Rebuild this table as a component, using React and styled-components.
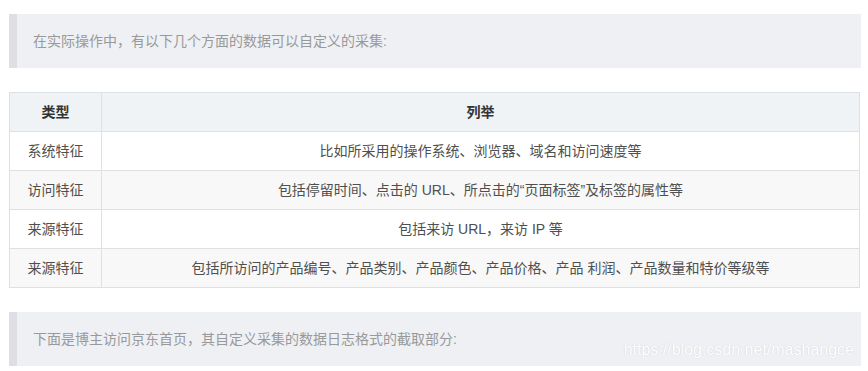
import React from "react";
import styled, { createGlobalStyle } from "styled-components";

const GlobalStyle = createGlobalStyle`
  body {
    margin: 0;
    background: #fff;
    font-family: "Liberation Sans", "Noto Sans CJK SC", sans-serif;
  }
`;

const rows = [
  { type: "系统特征", list: "比如所采用的操作系统、浏览器、域名和访问速度等" },
  { type: "访问特征", list: "包括停留时间、点击的 URL、所点击的“页面标签”及标签的属性等" },
  { type: "来源特征", list: "包括来访 URL，来访 IP 等" },
  { type: "来源特征", list: "包括所访问的产品编号、产品类别、产品颜色、产品价格、产品 利润、产品数量和特价等级等" },
];

const Article = styled.div`
  position: relative;
  width: 852px;
  padding: 14px 0 0 9px;
`;

const Quote = styled.blockquote`
  margin: 0 0 ${(p) => p.$gap}px;
  padding: 16px;
  border-left: 8px solid #dddfe4;
  background: #eef0f4;
  color: #999;
  font-size: 14px;
  line-height: 22px;
`;

const Table = styled.table`
  width: 851px;
  border-collapse: collapse;
  margin-bottom: 24px;
  font-size: 14px;
  line-height: 22px;
  color: #4f4f4f;
`;

const Th = styled.th`
  height: 38px;
  padding: 0 8px;
  border: 1px solid #dde1e5;
  background: #eff3f5;
  color: #333;
  font-weight: bold;
  text-align: center;
  width: ${(p) => p.$w || "auto"};
`;

const Row = styled.tr`
  background: ${(p) => (p.$alt ? "#f8f8f8" : "#fff")};
`;

const Td = styled.td`
  height: 38px;
  padding: 0 8px;
  border: 1px solid #dde1e5;
  text-align: center;
`;

const Watermark = styled.span`
  position: absolute;
  right: 7px;
  bottom: 7px;
  font-family: "Liberation Sans", Arial, sans-serif;
  font-size: 16px;
  color: #fff;
  text-shadow: 0 0 1px #d4d6da, 0 0 1px #d4d6da;
`;

export default function App() {
  return (
    <>
      <GlobalStyle />
      <Article>
        <Quote $gap={24}>在实际操作中，有以下几个方面的数据可以自定义的采集:</Quote>
        <Table>
          <thead>
            <tr>
              <Th $w="75px">类型</Th>
              <Th>列举</Th>
            </tr>
          </thead>
          <tbody>
            {rows.map((r, i) => (
              <Row key={i} $alt={i % 2 === 1}>
                <Td>{r.type}</Td>
                <Td>{r.list}</Td>
              </Row>
            ))}
          </tbody>
        </Table>
        <Quote $gap={0}>下面是博主访问京东首页，其自定义采集的数据日志格式的截取部分:</Quote>
        <Watermark>https://blog.csdn.net/mashangce</Watermark>
      </Article>
    </>
  );
}
